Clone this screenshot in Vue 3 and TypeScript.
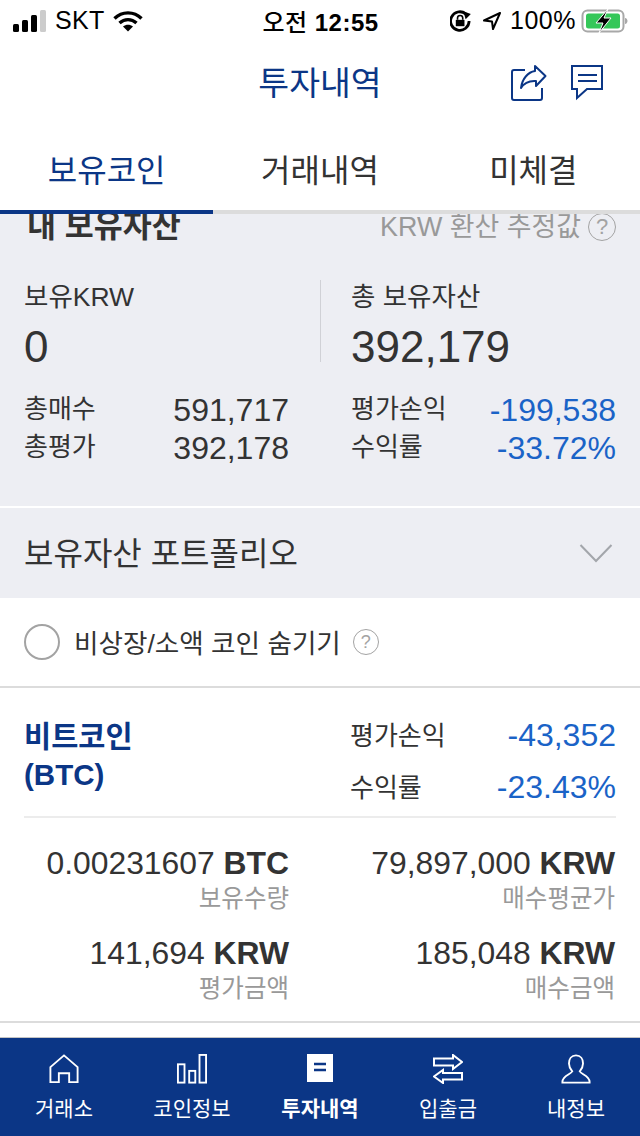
<template>
  <div class="screen">
    <div class="status-bar">
      <div class="status-left">
        <svg width="34" height="22" viewBox="0 0 34 22" class="signal">
          <rect x="0" y="14" width="6" height="8" rx="1.5" fill="#000" />
          <rect x="9" y="10" width="6" height="12" rx="1.5" fill="#000" />
          <rect x="18" y="5" width="6" height="17" rx="1.5" fill="#000" />
          <rect x="27" y="0" width="6" height="22" rx="1.5" fill="#ccc" />
        </svg>
        <span class="carrier">SKT</span>
        <svg width="30" height="22" viewBox="0 0 30 22">
          <path d="M1.500 8.500C9 1 21 1 28.500 8.500" fill="none" stroke="#000" stroke-width="3.400" />
          <path d="M6.500 13C11.500 8.500 18.500 8.500 23.500 13" fill="none" stroke="#000" stroke-width="3.400" />
          <path d="M10 16.500C13 14 17 14 20 16.500L15 21.500Z" fill="#000" />
        </svg>
      </div>
      <div class="clock"><span class="ampm">오전</span> 12:55</div>
      <div class="status-right">
        <svg width="22" height="22" viewBox="2 1.500 19 19" class="lock">
          <path d="M18.500 11A8 8 0 1 1 15.500 4.800" fill="none" stroke="#000" stroke-width="2.400" />
          <path d="M13.500 2.500L20 5L15.500 9.500Z" fill="#000" />
          <rect x="7" y="10" width="7.500" height="5.500" fill="#000" />
          <path d="M8.500 10V8.500a2.200 2.200 0 0 1 4.500 0V10" fill="none" stroke="#000" stroke-width="1.400" />
        </svg>
        <svg width="20" height="20" viewBox="0 0 20 20" class="loc">
          <path d="M18 2L2 9.500L10 10.500L11 18Z" fill="none" stroke="#000" stroke-width="2" stroke-linejoin="round" />
        </svg>
        <span class="pct">100%</span>
        <svg width="48" height="24" viewBox="0 0 48 24">
          <rect x="2.500" y="1.500" width="41" height="21" rx="5" fill="none" stroke="#a8a8a8" stroke-width="2" />
          <rect x="6" y="4.500" width="34" height="15" rx="2.500" fill="#35c759" />
          <path d="M45 9v6c1.600 0 2.500-1.500 2.500-3s-.9-3-2.500-3Z" fill="#a8a8a8" />
          <path d="M28 0L16 14h7l-4 10L31 9h-7Z" fill="#000" stroke="#fff" stroke-width="1" />
        </svg>
      </div>
    </div>

    <header class="app-header">
      <h1 class="title">투자내역</h1>
      <div class="header-actions">
        <svg width="36" height="36" viewBox="0 0 36 36">
          <path d="M14 5H3a2 2 0 0 0-2 2v26a2 2 0 0 0 2 2h26a2 2 0 0 0 2-2V23" fill="none" stroke="#0b3686" stroke-width="2" />
          <path d="M24 1L34.500 11L25 21V16C18 15.500 13 18 10 23C11 14 17 7 24 6Z" fill="none" stroke="#0b3686" stroke-width="2" stroke-linejoin="round" />
        </svg>
        <svg width="32" height="36" viewBox="0 0 32 36">
          <path d="M1 1H31V24H16L6 33V24H1Z" fill="none" stroke="#0b3686" stroke-width="2" />
          <path d="M7 10H26M7 16H26" stroke="#0b3686" stroke-width="2" />
        </svg>
      </div>
    </header>

    <nav class="tabs">
      <div v-for="(tab, i) in tabs" :key="tab" class="tab" :class="{ active: i === 0 }">{{ tab }}</div>
    </nav>

    <main class="content">
      <section class="summary">
        <div class="summary-head">
          <h2 class="summary-title">내 보유자산</h2>
          <div class="summary-note">KRW 환산 추정값 <span class="help help-lg">?</span></div>
        </div>
        <div class="totals">
          <div class="total total-left">
            <div class="total-label">보유KRW</div>
            <div class="total-value">0</div>
          </div>
          <div class="total total-right">
            <div class="total-label">총 보유자산</div>
            <div class="total-value">392,179</div>
          </div>
        </div>
        <div class="stats">
          <div class="stat-col">
            <div v-for="row in statsLeft" :key="row.label" class="stat-row">
              <span class="stat-label">{{ row.label }}</span>
              <span class="stat-value">{{ row.value }}</span>
            </div>
          </div>
          <div class="stat-col">
            <div v-for="row in statsRight" :key="row.label" class="stat-row">
              <span class="stat-label">{{ row.label }}</span>
              <span class="stat-value down">{{ row.value }}</span>
            </div>
          </div>
        </div>
      </section>

      <section class="portfolio">
        <span class="portfolio-label">보유자산 포트폴리오</span>
        <svg width="34" height="20" viewBox="0 0 34 20">
          <path d="M1.500 2L17 18L32.500 2" fill="none" stroke="#a3a6ab" stroke-width="2" />
        </svg>
      </section>

      <section class="filter">
        <span class="radio"></span>
        <span class="filter-label">비상장/소액 코인 숨기기</span>
        <span class="help">?</span>
      </section>

      <section class="coin">
        <div class="coin-head">
          <div class="coin-name">비트코인<br />(BTC)</div>
          <div class="coin-pnl">
            <div class="pnl-row"><span>평가손익</span><b class="down">-43,352</b></div>
            <div class="pnl-row"><span>수익률</span><b class="down">-23.43%</b></div>
          </div>
        </div>
        <div class="coin-grid">
          <div v-for="cell in coinCells" :key="cell.label" class="coin-cell">
            <div class="cell-value">{{ cell.value }} <b>{{ cell.unit }}</b></div>
            <div class="cell-label">{{ cell.label }}</div>
          </div>
        </div>
      </section>
    </main>

    <footer class="bottom-nav">
      <div class="nav-item">
        <svg width="30" height="30" viewBox="0 0 32 32">
          <path d="M1.500 30V14L16 1.500L30.500 14V30H21.500V20.500H10.500V30Z" fill="none" stroke="#fff" stroke-width="2" />
        </svg>
        <span>거래소</span>
      </div>
      <div class="nav-item">
        <svg width="30" height="30" viewBox="0 0 32 32">
          <rect x="1" y="11" width="7" height="19.500" fill="none" stroke="#fff" stroke-width="2" />
          <rect x="13" y="18" width="6.500" height="12.500" fill="none" stroke="#fff" stroke-width="2" />
          <rect x="24" y="1" width="7" height="29.500" fill="none" stroke="#fff" stroke-width="2" />
        </svg>
        <span>코인정보</span>
      </div>
      <div class="nav-item current">
        <svg width="30" height="30" viewBox="0 0 30 30">
          <path d="M2 0H28V28H2Z" fill="#fff" />
          <path d="M9 10H21M9 16H21" stroke="#0b3686" stroke-width="2.600" />
        </svg>
        <span>투자내역</span>
      </div>
      <div class="nav-item">
        <svg width="30" height="30" viewBox="0 0 30 30">
          <path d="M1 4.500H20V1L29 8L20 15V11.500H1Z" fill="none" stroke="#fff" stroke-width="2" />
          <path d="M29 19H10V16L1 22.500L10 29V25.500H29Z" fill="none" stroke="#fff" stroke-width="2" />
        </svg>
        <span>입출금</span>
      </div>
      <div class="nav-item">
        <svg width="30" height="30" viewBox="0 0 32 32">
          <path d="M16 1.500C11 1.500 8.500 5.500 8.500 10C8.500 14 10.500 16.500 12 18.500C10 22 2 23 1.500 29.500V30.500H30.500V29.500C30 23 22 22 20 18.500C21.500 16.500 23.500 14 23.500 10C23.500 5.500 21 1.500 16 1.500Z" fill="none" stroke="#fff" stroke-width="2" />
        </svg>
        <span>내정보</span>
      </div>
    </footer>
  </div>
</template>

<script setup lang="ts">
interface StatRow {
  label: string
  value: string
}

interface CoinCell {
  value: string
  unit: string
  label: string
}

const tabs = ['보유코인', '거래내역', '미체결']

const statsLeft: StatRow[] = [
  { label: '총매수', value: '591,717' },
  { label: '총평가', value: '392,178' },
]

const statsRight: StatRow[] = [
  { label: '평가손익', value: '-199,538' },
  { label: '수익률', value: '-33.72%' },
]

const coinCells: CoinCell[] = [
  { value: '0.00231607', unit: 'BTC', label: '보유수량' },
  { value: '79,897,000', unit: 'KRW', label: '매수평균가' },
  { value: '141,694', unit: 'KRW', label: '평가금액' },
  { value: '185,048', unit: 'KRW', label: '매수금액' },
]
</script>

<style scoped>
.screen {
  width: 640px;
  height: 1136px;
  display: flex;
  flex-direction: column;
  overflow: hidden;
  background: #fff;
  color: #333;
  font-family: "Liberation Sans", "Noto Sans CJK KR", sans-serif;
}

.status-bar {
  height: 40px;
  flex: none;
  display: grid;
  grid-template-columns: 1fr auto 1fr;
  align-items: center;
  padding: 1px 12px 0 13px;
  box-sizing: border-box;
  color: #000;
}

.status-left,
.status-right {
  display: flex;
  align-items: center;
}

.status-right {
  justify-content: flex-end;
}

.signal {
  margin-right: 8px;
}

.carrier {
  font-size: 25px;
  letter-spacing: 0.3px;
  margin-right: 8px;
}

.clock {
  font-size: 24px;
  font-weight: 700;
  letter-spacing: 0.5px;
}

.ampm {
  font-weight: 500;
}

.lock {
  margin-right: 10px;
}

.loc {
  margin-right: 8px;
}

.pct {
  font-size: 25px;
  letter-spacing: 0.5px;
  margin-right: 4px;
}

.app-header {
  height: 84px;
  flex: none;
  position: relative;
  display: flex;
  align-items: center;
  justify-content: center;
}

.title {
  margin: 0 0 4px;
  font-size: 33.5px;
  font-weight: 400;
  color: #0b3686;
}

.header-actions {
  position: absolute;
  right: 37px;
  top: 25px;
  display: flex;
  align-items: flex-start;
  gap: 24px;
}

.tabs {
  height: 86px;
  flex: none;
  display: grid;
  grid-template-columns: repeat(3, 1fr);
  border-bottom: 4px solid #dcdcdc;
  background: #fff;
  position: relative;
  z-index: 1;
}

.tab {
  display: flex;
  align-items: center;
  justify-content: center;
  padding-top: 2px;
  font-size: 32px;
  margin-bottom: -4px;
  border-bottom: 4px solid transparent;
}

.tab.active {
  color: #0b3686;
  border-bottom-color: #0b3686;
}

.content {
  flex: 1;
  min-height: 0;
  overflow: hidden;
}

.summary {
  background: #edeef3;
  height: 294px;
  padding: 0 24px;
  box-sizing: border-box;
  border-bottom: 2px solid #fff;
}

.summary-head {
  height: 32px;
  display: flex;
  align-items: flex-end;
  justify-content: space-between;
}

.summary-title {
  margin: 0 0 0 3px;
  font-size: 31.500px;
  font-weight: 700;
  line-height: 40px;
}

.summary-note {
  display: flex;
  align-items: center;
  gap: 7px;
  color: #999;
  font-size: 26.900px;
  line-height: 26px;
  margin-bottom: 6px;
}

.help {
  display: inline-flex;
  align-items: center;
  justify-content: center;
  width: 22px;
  height: 22px;
  border: 1.5px solid #a3a3a3;
  border-radius: 50%;
  box-sizing: border-box;
  color: #a3a3a3;
  font-size: 18px;
  line-height: 1;
}

.help-lg {
  width: 28px;
  height: 28px;
  margin: -1px 0;
  font-size: 22px;
}

.totals {
  display: grid;
  grid-template-columns: 297px 1fr;
  margin-top: 34px;
}

.total {
  height: 82px;
}

.total-left {
  border-right: 1px solid #d0d1d6;
}

.total-right {
  padding-left: 30px;
}

.total-label {
  font-size: 26.500px;
  line-height: 32px;
  padding-top: 1px;
}

.total-value {
  font-size: 44px;
  line-height: 50px;
  margin-top: 9px;
}

.stats {
  display: grid;
  grid-template-columns: 265px 265px;
  justify-content: space-between;
  margin-top: 25px;
}

.stat-col {
  display: flex;
  flex-direction: column;
}

.stat-row {
  display: flex;
  align-items: center;
  justify-content: space-between;
  height: 38px;
}

.stat-label {
  font-size: 26px;
}

.stat-value {
  font-size: 32px;
  padding-top: 9px;
}

.down {
  color: #1a63c7;
}

.portfolio {
  height: 90px;
  background: #edeef3;
  display: flex;
  align-items: center;
  justify-content: space-between;
  padding: 0 27px 0 24px;
  font-size: 32px;
}

.portfolio-label {
  margin-bottom: 4px;
}

.filter {
  height: 88px;
  display: flex;
  align-items: center;
  padding: 0 24px;
  border-bottom: 2px solid #dcdcdc;
}

.radio {
  width: 32px;
  height: 32px;
  border: 2px solid #a3a3a3;
  border-radius: 50%;
  margin-right: 14px;
}

.filter-label {
  font-size: 26.600px;
  margin-right: 12px;
  margin-bottom: 2px;
}

.filter .help {
  width: 26px;
  height: 26px;
}

.coin {
  padding: 0 24px;
  height: 335px;
  box-sizing: border-box;
  border-bottom: 2px solid #dcdcdc;
}

.coin-head {
  height: 128px;
  display: grid;
  grid-template-columns: 326px 1fr;
  border-bottom: 2px solid #ececec;
}

.coin-name {
  color: #0b3686;
  font-size: 29.500px;
  font-weight: 700;
  line-height: 38px;
  margin-top: 30px;
}

.coin-pnl {
  padding-top: 19px;
}

.pnl-row {
  display: flex;
  justify-content: space-between;
  align-items: center;
  height: 52px;
  font-size: 26px;
}

.pnl-row b {
  font-size: 32px;
  font-weight: 400;
  padding-top: 4px;
}

.coin-grid {
  display: grid;
  grid-template-columns: 265px 326px;
  row-gap: 18px;
  padding-top: 25px;
}

.coin-cell {
  text-align: right;
}

.cell-value {
  font-size: 31.850px;
  line-height: 40px;
}

.cell-label {
  color: #999;
  font-size: 24.500px;
  line-height: 32px;
}

.bottom-nav {
  height: 99px;
  flex: none;
  box-sizing: border-box;
  background: #0b3686;
  border-top: 1px solid #c4c4c4;
  display: grid;
  grid-template-columns: repeat(5, 1fr);
  color: #fff;
  font-size: 21px;
}

.nav-item {
  display: flex;
  flex-direction: column;
  align-items: center;
  gap: 8px;
  padding-top: 16px;
}

.nav-item.current {
  font-weight: 700;
}
</style>
<style>
html,
body {
  margin: 0;
}
</style>
